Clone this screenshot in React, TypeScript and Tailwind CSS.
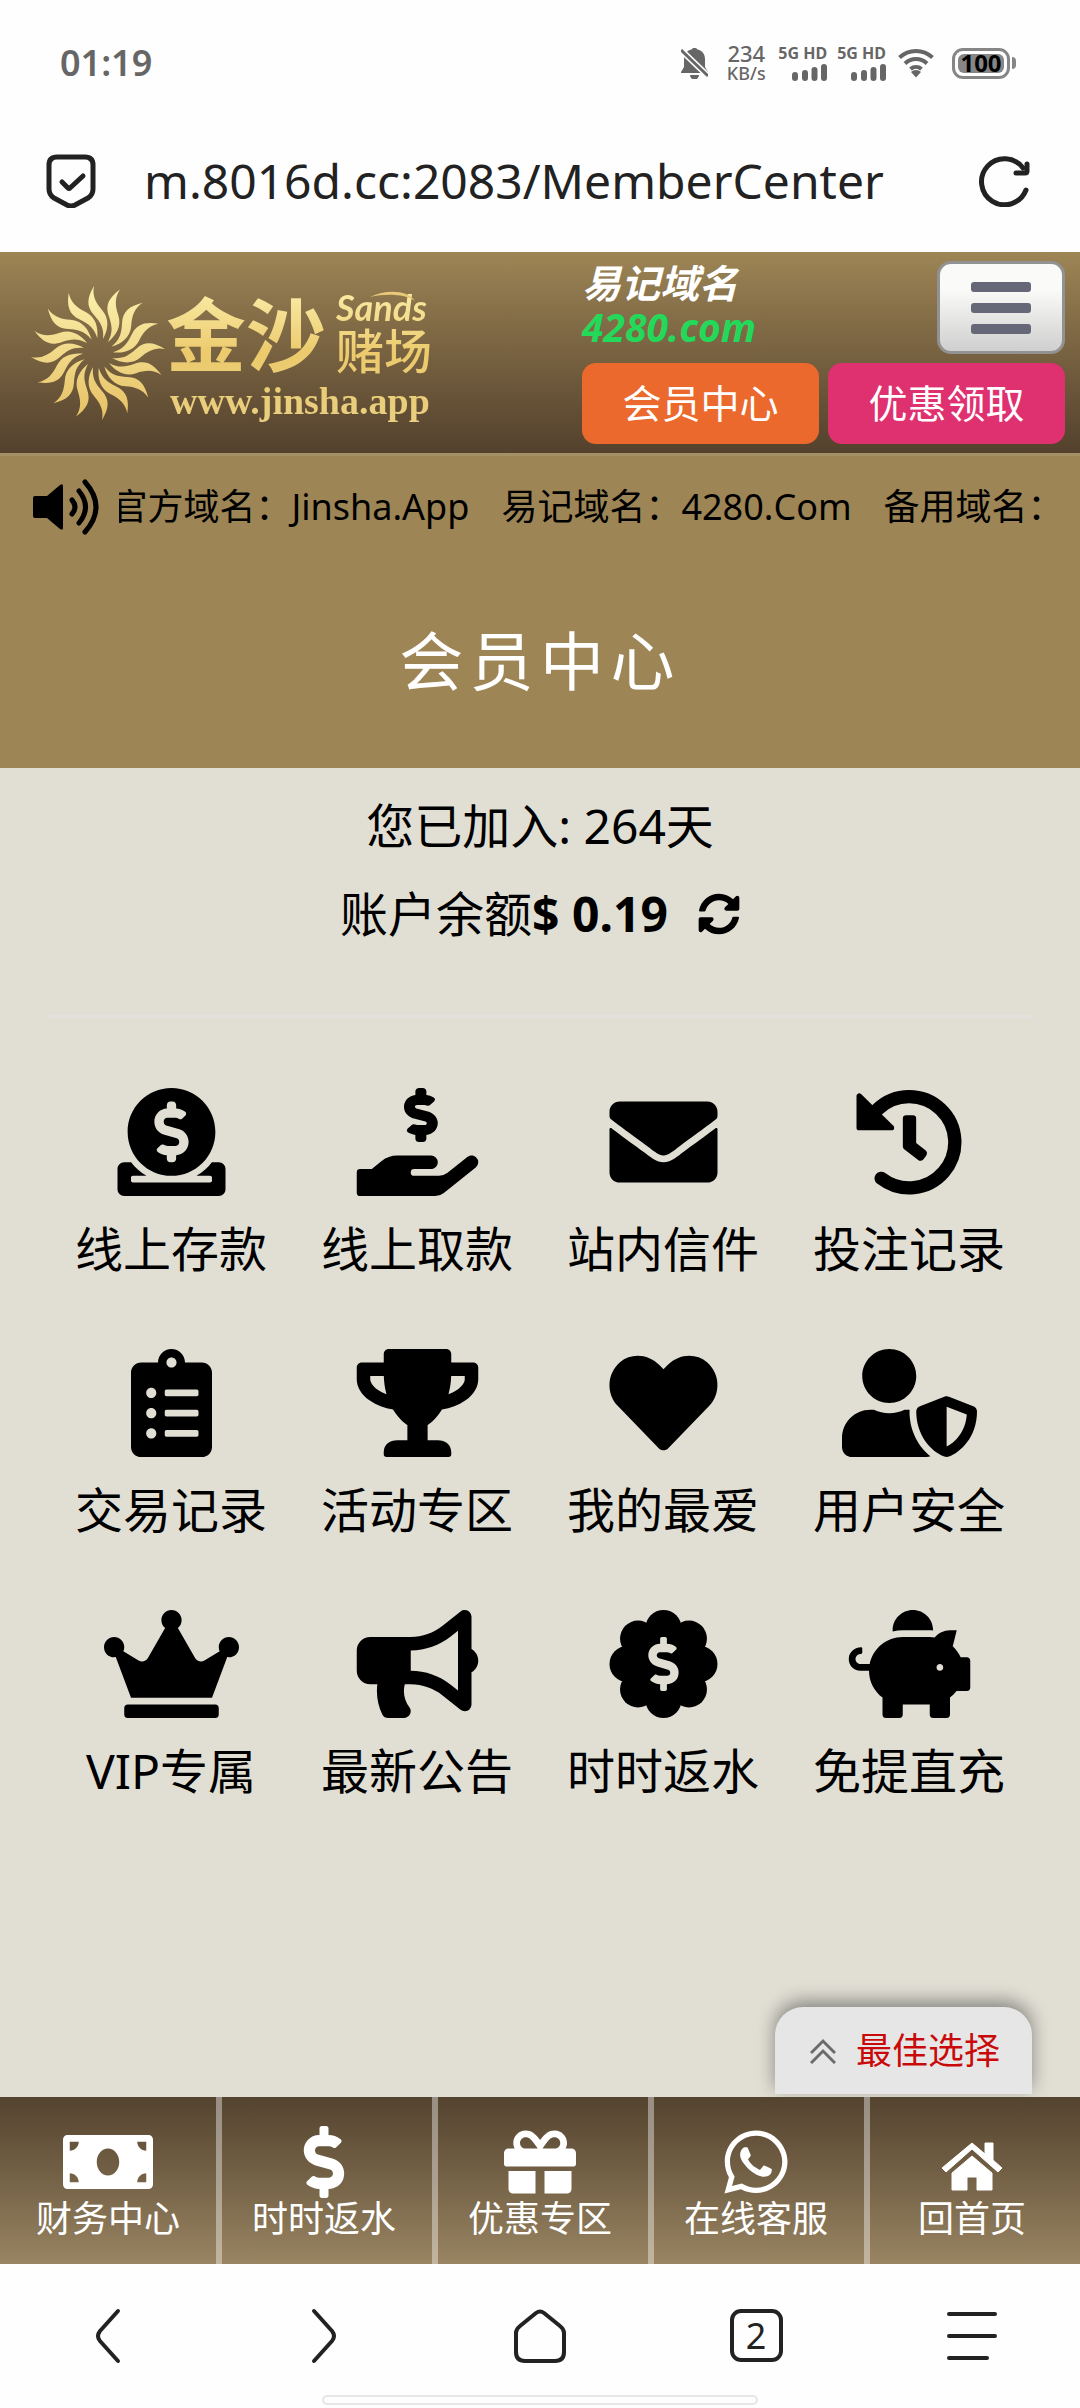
import React from 'react';
import {
    FaBullhorn,
    FaClipboardList,
    FaCrown,
    FaDollarSign,
    FaDonate,
    FaEnvelope,
    FaGift,
    FaHandHoldingUsd,
    FaHeart,
    FaMoneyBill,
    FaPiggyBank,
    FaSyncAlt,
    FaTrophy,
    FaUserShield,
    FaWhatsapp,
} from 'react-icons/fa';

interface IconProps {
    className?: string;
}

interface MenuItem {
    label: string;
    icon: React.ComponentType<IconProps>;
}

const MENU: MenuItem[] = [
    { label: '线上存款', icon: FaDonate },
    { label: '线上取款', icon: FaHandHoldingUsd },
    { label: '站内信件', icon: FaEnvelope },
    { label: '投注记录', icon: HistoryIcon },
    { label: '交易记录', icon: FaClipboardList },
    { label: '活动专区', icon: FaTrophy },
    { label: '我的最爱', icon: FaHeart },
    { label: '用户安全', icon: FaUserShield },
    { label: 'VIP专属', icon: FaCrown },
    { label: '最新公告', icon: FaBullhorn },
    { label: '时时返水', icon: BadgeDollarIcon },
    { label: '免提直充', icon: FaPiggyBank },
];

const TABS: MenuItem[] = [
    { label: '财务中心', icon: FaMoneyBill },
    { label: '时时返水', icon: FaDollarSign },
    { label: '优惠专区', icon: FaGift },
    { label: '在线客服', icon: FaWhatsapp },
    { label: '回首页', icon: HouseIcon },
];

const RAYS = Array.from({ length: 16 }, (_, i) => i * 22.5);
const LOBES = Array.from({ length: 8 }, (_, i) => (i * Math.PI) / 4);

export default function App() {
    return (
        <div className="flex min-h-screen flex-col bg-[#fefefe] font-['Noto_Sans','Noto_Sans_CJK_SC',sans-serif] text-black">
            <StatusBar />
            <AddressBar />
            <SiteHeader />
            <main className="flex flex-1 flex-col bg-[#e1dfd4]">
                <Notice />
                <h1 className="flex h-[207px] items-center justify-center bg-[#9d8555] pb-2 text-[64px] tracking-widest text-white">
                    会员中心
                </h1>
                <Summary />
                <nav className="grid grid-cols-4 gap-y-16 px-12 pt-[70px]">
                    {MENU.map(({ label, icon: Icon }) => (
                        <a key={label} href="#" className="flex flex-col items-center gap-4">
                            <Icon className="h-[108px] w-[135px]" />
                            <span className="text-[48px] leading-[73px]">{label}</span>
                        </a>
                    ))}
                </nav>
                <button className="mt-auto mr-12 mb-[3px] flex h-[87px] w-[257px] items-center justify-end gap-5 self-end rounded-t-[28px] bg-[#e6e6e6] pr-8 shadow-[0_-6px_18px_rgba(0,0,0,0.4)]">
                    <svg viewBox="0 0 26 26" className="size-[26px]" fill="none" stroke="#6b6b6b" strokeWidth="3">
                        <path d="M1 15 13 3l12 12M1 25 13 13l12 12" />
                    </svg>
                    <span className="text-[36px] text-[#c90a0a]">最佳选择</span>
                </button>
            </main>
            <TabBar />
            <BrowserBar />
        </div>
    );
}

function StatusBar() {
    return (
        <div className="flex h-[126px] items-center justify-between pr-16 pl-[60px] text-[#666]">
            <span className="text-[36px] font-semibold">01:19</span>
            <div className="flex items-center">
                <svg viewBox="0 0 27 31" className="h-[31px] w-[27px]" fill="#666">
                    <path d="M13.500 0a3 3 0 0 1 3 1.500c5 1.200 7.500 5 7.500 9.500v8l3 5v1H0v-1l3-5v-8C3 6.500 5.500 2.700 10.500 1.500A3 3 0 0 1 13.500 0zM9 27h9a4.500 4.500 0 0 1-9 0z" />
                    <path d="M0 2l27 26" stroke="#fefefe" strokeWidth="6" />
                    <path d="M0 2l27 26" stroke="#666" strokeWidth="3" />
                </svg>
                <div className="ml-4 w-[44px] text-center font-medium">
                    <div className="text-[22px] leading-5">234</div>
                    <div className="text-[18px] leading-5">KB/s</div>
                </div>
                <Signal />
                <Signal />
                <svg viewBox="0 0 36 30" className="ml-3 h-[30px] w-9" fill="none" stroke="#666" strokeWidth="4">
                    <path d="M1.500 9.500a24 24 0 0 1 33 0M7 15.500a16 16 0 0 1 22 0M12.500 21a8.500 8.500 0 0 1 11 0" />
                    <path d="M18 29.500l-5-5.500a7 7 0 0 1 10 0z" fill="#666" stroke="none" />
                </svg>
                <div className="ml-[18px] flex h-[31px] w-[58px] items-center rounded-[11px] border-[3px] border-[#868686] p-[3px]">
                    <div className="flex h-full flex-1 items-center justify-center rounded-[6px] bg-[#868686] text-[24px] font-bold text-black">
                        100
                    </div>
                </div>
                <div className="ml-[2px] h-3 w-1 rounded-r-full bg-[#868686]" />
            </div>
        </div>
    );
}

function Signal() {
    return (
        <div className="ml-[10px] flex flex-col items-end gap-1">
            <span className="text-[16px] leading-[14px] font-bold">5G HD</span>
            <svg viewBox="0 0 35 17" className="h-[17px] w-[35px]" stroke="#666" strokeWidth="6" strokeLinecap="round">
                <path d="M3 11v3M13 9v5M22.500 6v8M32 3v11" />
            </svg>
        </div>
    );
}

function AddressBar() {
    return (
        <div className="mb-4 flex h-[110px] items-center pr-12 pl-[46px]">
            <svg viewBox="0 0 50 54" className="h-[54px] w-[50px]" fill="none" stroke="#222" strokeWidth="5" strokeLinecap="round" strokeLinejoin="round">
                <path d="M11 3h28q8 0 8 8v24q0 6-5 9l-13 7q-4 2-8 0L8 44q-5-3-5-9V11q0-8 8-8z" />
                <path d="M16 28l6 6q1 1 2 0l13-12" />
            </svg>
            <input
                aria-label="网址"
                defaultValue="m.8016d.cc:2083/MemberCenter"
                className="ml-12 min-w-0 flex-1 bg-transparent text-[48px] text-[#222] outline-none"
            />
            <button aria-label="刷新">
                <svg viewBox="0 0 54 52" className="h-[52px] w-[54px]" fill="none" stroke="#222" strokeWidth="5" strokeLinecap="round" strokeLinejoin="round">
                    <path d="M48 35A23 23 0 1 1 45 13" />
                    <path d="M38 18h9q2 0 2-2V9" />
                </svg>
            </button>
        </div>
    );
}

function SiteHeader() {
    return (
        <header className="flex h-[201px] justify-between bg-linear-to-b from-[#9d8555] to-[#54412d] pr-[15px] pl-[30px]">
            <Logo />
            <div className="grid w-[483px] grid-cols-2 content-start gap-x-[9px] gap-y-[9px] pt-[9px]">
                <div className="text-[39px] leading-[44px] font-bold text-white italic">
                    易记域名
                    <div className="text-[#24d95a]">4280.com</div>
                </div>
                <button
                    aria-label="菜单"
                    className="flex h-[93px] w-32 flex-col items-center justify-center gap-[11px] justify-self-end rounded-[14px] border-[3px] border-[#929292] bg-linear-to-b from-[#fafaf8] from-30% to-[#cfcfcf]"
                >
                    <span className="h-[10px] w-[60px] rounded-[3px] bg-[#676877]" />
                    <span className="h-[10px] w-[60px] rounded-[3px] bg-[#676877]" />
                    <span className="h-[10px] w-[60px] rounded-[3px] bg-[#676877]" />
                </button>
                <a href="#" className="flex h-[81px] items-center justify-center rounded-[14px] bg-[#eb692c] text-[39px] text-white">
                    会员中心
                </a>
                <a href="#" className="flex h-[81px] items-center justify-center rounded-[14px] bg-[#df3070] text-[39px] text-white">
                    优惠领取
                </a>
            </div>
        </header>
    );
}

function Logo() {
    return (
        <a href="#" className="flex items-center">
            <svg viewBox="-68 -68 136 136" className="size-[136px]">
                <defs>
                    <linearGradient id="sun" gradientUnits="userSpaceOnUse" x1="0" y1="-68" x2="0" y2="68">
                        <stop offset="0" stopColor="#fbf2ae" />
                        <stop offset="1" stopColor="#e6bf62" />
                    </linearGradient>
                    <mask id="rays" maskUnits="userSpaceOnUse" x="-68" y="-68" width="136" height="136">
                        {RAYS.map((deg) => (
                            <path
                                key={deg}
                                d="M-4 -67C-11 -55 -12 -47 -4 -38C3 -30 6 -25 5 -14C10 -23 12 -34 4 -43C-2 -50 -6 -57 -4 -67Z"
                                fill="white"
                                transform={`rotate(${deg})`}
                            />
                        ))}
                    </mask>
                </defs>
                <rect x="-68" y="-68" width="136" height="136" fill="url(#sun)" mask="url(#rays)" />
            </svg>
            <div className="relative flex flex-col bg-linear-to-b from-[#fbf0ac] via-[#ecca6c] to-[#e9cf80] bg-clip-text pt-2 text-transparent">
                <div className="flex gap-[10px]">
                    <span className="text-[80px] leading-[86px] font-bold">金沙</span>
                    <div className="flex flex-col">
                        <span className="font-['Lato'] text-[36px] leading-8 font-bold italic">Sands</span>
                        <span className="text-[48px] leading-[56px] font-medium">赌场</span>
                    </div>
                </div>
                <span className="pl-1 font-['Liberation_Serif'] text-[38px] leading-[44px] font-bold">www.jinsha.app</span>
                {/* swoosh over the script name */}
                <svg viewBox="0 0 46 12" className="absolute top-2 right-4 h-3 w-[46px]" fill="#e9c978">
                    <path d="M0 6C16 -2 38 -1 45 10C36 3 16 2 0 6z" />
                </svg>
            </div>
        </a>
    );
}

function Notice() {
    return (
        <div className="flex h-[108px] items-center gap-[18px] border-t-[3px] border-[#a49165] bg-[#9d8555] pr-6 pb-1 pl-[33px]">
            <svg viewBox="0 0 68 56" className="h-14 w-[68px] shrink-0" fill="none" stroke="black" strokeWidth="5" strokeLinecap="round">
                <path d="M2 17h12L27 6q3-2 3 1v42q0 3-3 1L14 39H2q-2 0-2-2V19q0-2 2-2z" fill="black" stroke="none" />
                <path d="M39 21q6 7 0 14M46 12q13 16 0 32M52 3q22 25 0 50" />
            </svg>
            <div className="flex min-w-0 flex-1 justify-center overflow-hidden text-[36px] whitespace-nowrap">
                <div className="flex shrink-0 gap-8">
                    <span>官方域名：Jinsha.App</span>
                    <span>易记域名：4280.Com</span>
                    <span>备用域名：</span>
                </div>
            </div>
        </div>
    );
}

function Summary() {
    return (
        <section className="mx-12 border-b-[3px] border-[#e3e1de] pt-[14px] pb-[57px] text-center text-[48px] leading-[88px]">
            <p>您已加入: 264天</p>
            <p className="flex items-center justify-center">
                账户余额<b>$ 0.19</b>
                <button aria-label="刷新余额" className="ml-[30px]">
                    <FaSyncAlt className="size-[42px]" />
                </button>
            </p>
        </section>
    );
}

function TabBar() {
    return (
        <nav className="grid h-[167px] grid-cols-5 bg-linear-to-b from-[#54432f] to-[#998562] text-white">
            {TABS.map(({ label, icon: Icon }) => (
                <a
                    key={label}
                    href="#"
                    className="flex flex-col items-center pt-[29px] not-first:shadow-[inset_6px_0_0_rgba(255,255,255,0.4)]"
                >
                    <Icon className="h-[72px] w-[90px]" />
                    <span className="text-[36px] leading-[42px]">{label}</span>
                </a>
            ))}
        </nav>
    );
}

function BrowserBar() {
    return (
        <div className="flex h-36 flex-col items-center justify-between pb-[3px]">
            <div className="grid h-full w-full grid-cols-5 items-center justify-items-center pt-3">
                <button aria-label="后退">
                    <svg viewBox="0 0 56 56" className="size-14" fill="none" stroke="#222" strokeWidth="4" strokeLinecap="round" strokeLinejoin="round">
                        <path d="M38 3 20 23q-4 5 0 10l18 20" />
                    </svg>
                </button>
                <button aria-label="前进">
                    <svg viewBox="0 0 56 56" className="size-14" fill="none" stroke="#222" strokeWidth="4" strokeLinecap="round" strokeLinejoin="round">
                        <path d="M18 3l18 20q4 5 0 10L18 53" />
                    </svg>
                </button>
                <button aria-label="主页">
                    <svg viewBox="0 0 56 56" className="size-14" fill="none" stroke="#222" strokeWidth="4" strokeLinecap="round" strokeLinejoin="round">
                        <path d="M8 18 24 5q4-3 8 0l16 13q4 3 4 7v19q0 9-9 9H13q-9 0-9-9V25q0-4 4-7z" />
                    </svg>
                </button>
                <button
                    aria-label="标签页"
                    className="flex size-[53px] items-center justify-center rounded-[11px] border-4 border-[#222] text-[36px] text-[#222]"
                >
                    2
                </button>
                <button aria-label="更多">
                    <svg viewBox="0 0 56 56" className="size-14" stroke="#222" strokeWidth="4" strokeLinecap="round">
                        <path d="M5 6h46M5 28h46M5 50h38" />
                    </svg>
                </button>
            </div>
            <div className="h-[10px] w-[436px] shrink-0 rounded-full border-2 border-[#e6e6e6]" />
        </div>
    );
}

function HistoryIcon({ className }: IconProps) {
    return (
        <svg viewBox="0 0 324 324" className={className} fill="currentColor">
            <path d="M66 64A137 137 0 1 1 77 271" fill="none" stroke="currentColor" strokeWidth="40" strokeLinecap="round" />
            <path d="M11 24v95h97z" stroke="currentColor" strokeWidth="16" strokeLinejoin="round" />
            <path d="M142 92q0-10 10-10h20q10 0 10 10v73l28 22q8 7 2 16l-8 11q-8 8-16 2l-42-32q-4-3-4-9z" />
        </svg>
    );
}

function BadgeDollarIcon({ className }: IconProps) {
    return (
        <svg viewBox="0 0 108 108" className={className} fill="currentColor">
            <circle cx="54" cy="54" r="38" />
            {LOBES.map((a) => (
                <circle key={a} cx={54 + 36 * Math.cos(a)} cy={54 + 36 * Math.sin(a)} r="18" />
            ))}
            <FaDollarSign x="27" y="27" size={54} color="#e1dfd4" />
        </svg>
    );
}

function HouseIcon({ className }: IconProps) {
    return (
        <svg viewBox="0 -16 62 72" className={className} fill="currentColor" stroke="currentColor" strokeLinejoin="round">
            <path d="M31 1 44 12V1h8v17l9 8-4 4L31 7 5 30l-4-4z" />
            <path d="M31 14l20 17v17H36V35H26v13H11V31z" />
        </svg>
    );
}
